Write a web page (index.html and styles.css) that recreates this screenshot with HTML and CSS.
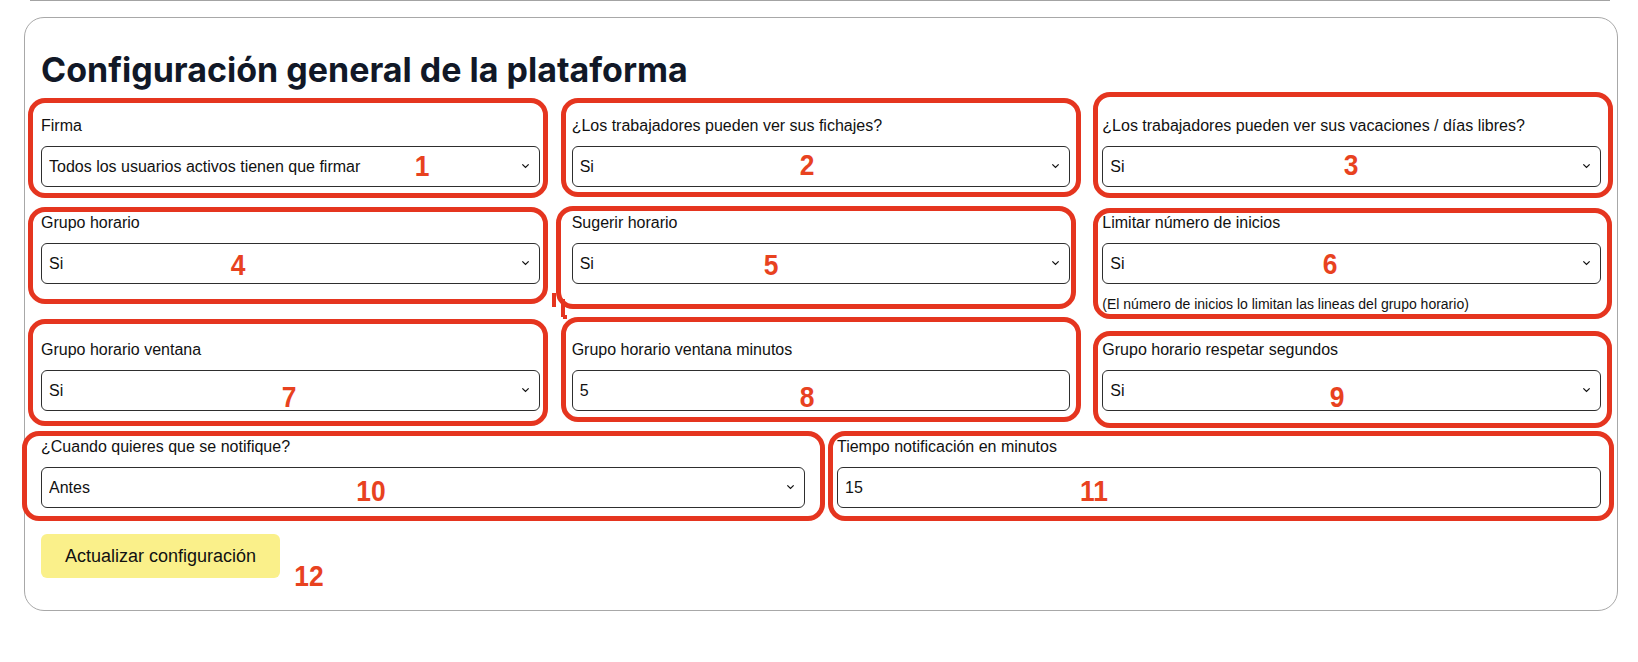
FILE: index.html
```html
<!DOCTYPE html>
<html lang="es">
<head>
	<meta charset="utf-8">
	<title>Configuración general de la plataforma</title>
	<meta name="viewport" content="width=device-width, initial-scale=1">
	<link rel="stylesheet" href="styles.css">
</head>
<body>
	<div class="prev-edge"></div>
	<div class="card">
		<h1 class="card-title">Configuración general de la plataforma</h1>
		<form class="settings-grid">
			<div class="field span-2">
				<label for="firma">Firma</label>
				<div class="select-wrap">
					<select id="firma"><option>Todos los usuarios activos tienen que firmar</option></select>
					<svg class="chevron" viewBox="0 0 10 6"><path d="M1.5 1.2l3.5 3.4 3.5-3.4"/></svg>
				</div>
			</div>
			<div class="field span-2">
				<label for="ver_fichajes">¿Los trabajadores pueden ver sus fichajes?</label>
				<div class="select-wrap">
					<select id="ver_fichajes"><option>Si</option><option>No</option></select>
					<svg class="chevron" viewBox="0 0 10 6"><path d="M1.5 1.2l3.5 3.4 3.5-3.4"/></svg>
				</div>
			</div>
			<div class="field span-2">
				<label for="ver_vacaciones">¿Los trabajadores pueden ver sus vacaciones / días libres?</label>
				<div class="select-wrap">
					<select id="ver_vacaciones"><option>Si</option><option>No</option></select>
					<svg class="chevron" viewBox="0 0 10 6"><path d="M1.5 1.2l3.5 3.4 3.5-3.4"/></svg>
				</div>
			</div>

			<div class="field span-2">
				<label for="grupo_horario">Grupo horario</label>
				<div class="select-wrap">
					<select id="grupo_horario"><option>Si</option><option>No</option></select>
					<svg class="chevron" viewBox="0 0 10 6"><path d="M1.5 1.2l3.5 3.4 3.5-3.4"/></svg>
				</div>
			</div>
			<div class="field span-2">
				<label for="sugerir_horario">Sugerir horario</label>
				<div class="select-wrap">
					<select id="sugerir_horario"><option>Si</option><option>No</option></select>
					<svg class="chevron" viewBox="0 0 10 6"><path d="M1.5 1.2l3.5 3.4 3.5-3.4"/></svg>
				</div>
			</div>
			<div class="field span-2">
				<label for="limitar_inicios">Limitar número de inicios</label>
				<div class="select-wrap">
					<select id="limitar_inicios"><option>Si</option><option>No</option></select>
					<svg class="chevron" viewBox="0 0 10 6"><path d="M1.5 1.2l3.5 3.4 3.5-3.4"/></svg>
				</div>
				<p class="help">(El número de inicios lo limitan las lineas del grupo horario)</p>
			</div>

			<div class="field span-2">
				<label for="ventana">Grupo horario ventana</label>
				<div class="select-wrap">
					<select id="ventana"><option>Si</option><option>No</option></select>
					<svg class="chevron" viewBox="0 0 10 6"><path d="M1.5 1.2l3.5 3.4 3.5-3.4"/></svg>
				</div>
			</div>
			<div class="field span-2">
				<label for="ventana_minutos">Grupo horario ventana minutos</label>
				<input type="text" id="ventana_minutos" value="5">
			</div>
			<div class="field span-2">
				<label for="respetar_segundos">Grupo horario respetar segundos</label>
				<div class="select-wrap">
					<select id="respetar_segundos"><option>Si</option><option>No</option></select>
					<svg class="chevron" viewBox="0 0 10 6"><path d="M1.5 1.2l3.5 3.4 3.5-3.4"/></svg>
				</div>
			</div>

			<div class="field span-3">
				<label for="notificar">¿Cuando quieres que se notifique?</label>
				<div class="select-wrap">
					<select id="notificar"><option>Antes</option><option>Después</option></select>
					<svg class="chevron" viewBox="0 0 10 6"><path d="M1.5 1.2l3.5 3.4 3.5-3.4"/></svg>
				</div>
			</div>
			<div class="field span-3">
				<label for="tiempo_notificacion">Tiempo notificación en minutos</label>
				<input type="text" id="tiempo_notificacion" value="15">
			</div>
		</form>
		<button type="button" class="btn-update">Actualizar configuración</button>
	</div>

	<!-- anotaciones en rojo sobre la captura -->
	<div class="annotations">
		<div class="mark-box box-1"></div>
		<div class="mark-box box-2"></div>
		<div class="mark-box box-3"></div>
		<div class="mark-box box-4"></div>
		<div class="mark-box box-5"></div>
		<div class="mark-box box-6"></div>
		<div class="mark-box box-7"></div>
		<div class="mark-box box-8"></div>
		<div class="mark-box box-9"></div>
		<div class="mark-box box-10"></div>
		<div class="mark-box box-11"></div>
		<span class="mark-num num-1">1</span>
		<span class="mark-num num-2">2</span>
		<span class="mark-num num-3">3</span>
		<span class="mark-num num-4">4</span>
		<span class="mark-num num-5">5</span>
		<span class="mark-num num-6">6</span>
		<span class="mark-num num-7">7</span>
		<span class="mark-num num-8">8</span>
		<span class="mark-num num-9">9</span>
		<span class="mark-num num-10">10</span>
		<span class="mark-num num-11">11</span>
		<span class="mark-num num-12">12</span>
		<svg class="mark-stray" viewBox="0 0 20 30"><path d="M4 2v14M13 8v18M13 26h4"/></svg>
	</div>
</body>
</html>
```

FILE: styles.css
```css
body {
	margin: 0;
	position: relative;
	background: #fff;
	color: #111;
	font-family: "Liberation Sans", Arial, sans-serif;
}
.prev-edge {
	margin-left: 30px;
	width: 1580px;
	height: 1px;
	background: #a3a3a3;
}
.card {
	margin: 16px 20px 40px 24px;
	padding: 32px 16px;
	border: 1px solid #a8a8a8;
	border-radius: 20px;
}
.card-title {
	margin: 0 0 24px;
	font-family: Inter, "Liberation Sans", sans-serif;
	font-size: 34px;
	line-height: 40px;
	font-weight: 700;
	color: #111827;
}
.settings-grid {
	display: grid;
	grid-template-columns: repeat(6, 1fr);
	column-gap: 32px;
	row-gap: 24px;
	align-items: start;
}
.span-2 {
	grid-column: span 2;
}
.span-3 {
	grid-column: span 3;
}
.field label {
	display: block;
	margin-bottom: 8px;
	font-size: 16px;
	line-height: 24px;
	color: #111;
}
.select-wrap {
	position: relative;
}
.field select,
.field input {
	display: block;
	width: 100%;
	height: 41px;
	margin: 0;
	padding: 0 32px 0 7px;
	box-sizing: border-box;
	border: 1px solid #2e2e2e;
	border-radius: 6px;
	background: #fff;
	font-family: "Liberation Sans", Arial, sans-serif;
	font-size: 16px;
	color: #111;
	appearance: none;
	-webkit-appearance: none;
}
.chevron {
	position: absolute;
	right: 10px;
	top: 17px;
	width: 9px;
	height: 6px;
	fill: none;
	stroke: #111;
	stroke-width: 1.4;
	pointer-events: none;
}
.help {
	margin: 10px 0 0;
	font-size: 14px;
	line-height: 20px;
	color: #111;
}
.btn-update {
	margin-top: 26px;
	padding: 9px 24px;
	border: none;
	border-radius: 6px;
	background: #faf08a;
	font-family: "Liberation Sans", Arial, sans-serif;
	font-size: 18px;
	line-height: 26px;
	color: #111;
}

/* anotaciones */
.annotations {
	position: absolute;
	top: 0;
	left: 0;
	width: 100%;
	height: 100%;
	pointer-events: none;
}
.mark-box {
	position: absolute;
	box-sizing: border-box;
	border: 5px solid #e5351f;
	border-radius: 17px;
}
.box-1 { left: 28px; top: 98px; width: 520px; height: 100px; }
.box-2 { left: 561px; top: 98px; width: 520px; height: 99px; }
.box-3 { left: 1093px; top: 92px; width: 520px; height: 106px; }
.box-4 { left: 28px; top: 207px; width: 520px; height: 97px; }
.box-5 { left: 556px; top: 206px; width: 520px; height: 103px; }
.box-6 { left: 1093px; top: 208px; width: 519px; height: 111px; }
.box-7 { left: 28px; top: 319px; width: 520px; height: 107px; }
.box-8 { left: 561px; top: 317px; width: 520px; height: 105px; }
.box-9 { left: 1093px; top: 331px; width: 519px; height: 97px; }
.box-10 { left: 22px; top: 431px; width: 803px; height: 90px; }
.box-11 { left: 828px; top: 431px; width: 786px; height: 90px; }
.mark-num {
	position: absolute;
	transform: translate(-50%, -50%) scaleX(0.88);
	font-family: "Liberation Sans", Arial, sans-serif;
	font-size: 30px;
	line-height: 30px;
	font-weight: 700;
	color: #e8421f;
}
.num-1 { left: 422px; top: 166px; }
.num-2 { left: 807px; top: 165px; }
.num-3 { left: 1351px; top: 165px; }
.num-4 { left: 238px; top: 265px; }
.num-5 { left: 771px; top: 265px; }
.num-6 { left: 1330px; top: 264px; }
.num-7 { left: 289px; top: 397px; }
.num-8 { left: 807px; top: 397px; }
.num-9 { left: 1337px; top: 397px; }
.num-10 { left: 371px; top: 491px; }
.num-11 { left: 1094px; top: 491px; }
.num-12 { left: 309px; top: 576px; }
.mark-stray {
	position: absolute;
	left: 550px;
	top: 291px;
	width: 20px;
	height: 30px;
	fill: none;
	stroke: #e5351f;
	stroke-width: 4;
}
```
